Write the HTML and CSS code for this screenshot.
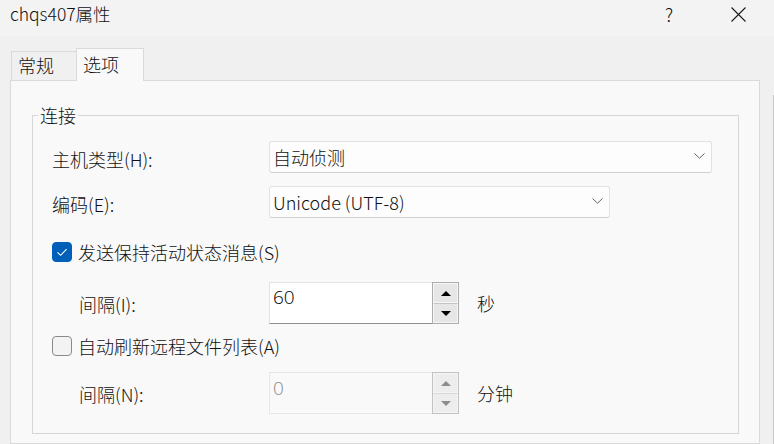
FILE: index.html
```html
<!DOCTYPE html>
<html lang="zh-CN">
<head>
<meta charset="utf-8">
<title>chqs407属性</title>
<link rel="stylesheet" href="styles.css">
</head>
<body>
<div class="window">
  <header class="titlebar">
    <span class="title">chqs407属性</span>
    <span class="help">?</span>
    <span class="close">
      <svg width="15" height="15" viewBox="0 0 15 15"><path d="M0.5 0.5 L14.5 14.5 M14.5 0.5 L0.5 14.5" stroke="#1b1b1b" stroke-width="1.1" fill="none"/></svg>
    </span>
  </header>
  <main class="body">
    <div class="tabs">
      <div class="tab">常规</div>
      <div class="tab active">选项</div>
    </div>
    <section class="panel">
      <fieldset class="group">
        <legend>连接</legend>
        <div class="row r1">
          <label class="lbl">主机类型(H):</label>
          <div class="combo wide"><span>自动侦测</span>
            <svg class="chev" width="11" height="6" viewBox="0 0 11 6"><path d="M0.5 0.5 L5.5 5.2 L10.5 0.5" stroke="#616161" stroke-width="1" fill="none"/></svg>
          </div>
        </div>
        <div class="row r2">
          <label class="lbl">编码(E):</label>
          <div class="combo narrow"><span class="latin">Unicode (UTF-8)</span>
            <svg class="chev" width="11" height="6" viewBox="0 0 11 6"><path d="M0.5 0.5 L5.5 5.2 L10.5 0.5" stroke="#616161" stroke-width="1" fill="none"/></svg>
          </div>
        </div>
        <div class="row r3">
          <span class="check on">
            <svg width="20" height="20" viewBox="0 0 20 20"><path d="M5.5 10.3 L8.6 13.3 L14.6 7.2" stroke="#fff" stroke-width="1.1" fill="none"/></svg>
          </span>
          <span class="check-text">发送保持活动状态消息(S)</span>
        </div>
        <div class="row r4">
          <label class="lbl indent">间隔(I):</label>
          <div class="spin">
            <div class="spin-input">60</div>
            <div class="spin-btns">
              <div class="sbtn"><span class="tri up"></span></div>
              <div class="sbtn down"><span class="tri dn"></span></div>
            </div>
          </div>
          <span class="unit">秒</span>
        </div>
        <div class="row r5">
          <span class="check"></span>
          <span class="check-text">自动刷新远程文件列表(A)</span>
        </div>
        <div class="row r6">
          <label class="lbl indent">间隔(N):</label>
          <div class="spin disabled">
            <div class="spin-input">0</div>
            <div class="spin-btns">
              <div class="sbtn"><span class="tri up"></span></div>
              <div class="sbtn down"><span class="tri dn"></span></div>
            </div>
          </div>
          <span class="unit">分钟</span>
        </div>
      </fieldset>
    </section>
  </main>
</div>
</body>
</html>
```

FILE: styles.css
```css
* { box-sizing: border-box; }
html, body { margin: 0; padding: 0; }
body {
  width: 774px;
  height: 444px;
  overflow: hidden;
  background: #f0f0f0;
  font-family: "Noto Sans CJK SC", "Noto Sans", sans-serif;
  font-size: 18px;
  font-weight: 300;
  color: #111111;
}
.window { width: 774px; height: 444px; position: relative; }
.window::after {
  content: "";
  position: absolute;
  right: 0;
  top: 95px;
  bottom: 0;
  width: 1px;
  background: #c8c8c8;
}

.titlebar {
  height: 36px;
  background: #f3f3f3;
  display: flex;
  align-items: flex-start;
  line-height: 28px;
  padding-left: 10px;
}
.title { flex: 1; font-size: 17.5px; }
.help { width: 30px; text-align: center; margin-right: 32px; }
.close {
  width: 45px;
  height: 28px;
  margin-right: 13px;
  display: flex;
  align-items: center;
  justify-content: center;
}
.close svg { display: block; }

.body { padding: 12px 0 0 10px; }

.tabs {
  width: 750px;
  height: 33px;
  display: flex;
  align-items: flex-end;
  padding-left: 1px;
  border-bottom: 1px solid #dadada;
}
.tab {
  width: 65px;
  height: 29px;
  border: 1px solid #dadada;
  border-bottom: none;
  border-right: none;
  background: #f0f0f0;
  padding: 0 0 3px 6px;
  display: flex;
  align-items: center;
  line-height: 20px;
}
.tab.active {
  width: 68px;
  height: 33px;
  margin-bottom: -1px;
  border-right: 1px solid #dadada;
  background: #f9f9f9;
}

.panel {
  width: 750px;
  height: 363px;
  background: #f9f9f9;
  border: 1px solid #dadada;
  border-top: none;
  padding: 22px 20px 0 21px;
}

.group {
  margin: 0;
  min-width: 0;
  padding: 0 19px 19px 19px;
  border: 1px solid #d6d6d6;
}
.group legend {
  margin-left: -14px;
  padding: 0 2px;
  line-height: 24px;
}

.row { display: flex; align-items: center; }
.r1 { height: 32px; margin-top: 14px; }
.r2 { height: 32px; margin-top: 13px; }
.r3 { height: 20px; margin-top: 24px; }
.r4 { height: 42px; margin-top: 20px; }
.r5 { height: 20px; margin-top: 12px; }
.r6 { height: 42px; margin-top: 16px; }

.lbl { width: 217px; line-height: 24px; padding-top: 4px; }
.lbl.indent { padding-left: 27px; padding-top: 2px; }

.combo {
  height: 32px;
  background: #fdfdfd;
  border: 1px solid #e2e2e2;
  border-bottom-color: #d0d0d0;
  border-radius: 3px;
  display: flex;
  align-items: center;
  justify-content: space-between;
  padding: 0 6px 1px 3px;
  line-height: 24px;
}
.combo.wide { width: 443px; }
.combo.narrow { width: 341px; }
.chev { display: block; margin-top: -1px; }

.check {
  width: 20px;
  height: 20px;
  border-radius: 4px;
  border: 1px solid #8a8a8a;
  background: #f3f3f3;
  flex: none;
}
.check.on { background: #005fb8; border-color: #005fb8; }
.check.on svg { display: block; margin: -1px; }
.check-text { margin-left: 6px; line-height: 24px; }

.spin {
  width: 190px;
  height: 42px;
  display: flex;
}
.spin-input {
  flex: 1;
  background: #ffffff;
  border: 1px solid #e3e3e3;
  border-right: none;
  border-bottom: 1px solid #8f8f8f;
  font-family: "Open Sans", "Liberation Sans", sans-serif;
  font-weight: 300;
  font-size: 19px;
  line-height: 22px;
  padding: 3px 0 0 3px;
  color: #000;
}
.spin-btns {
  width: 27px;
  border: 1px solid #adadad;
  display: flex;
  flex-direction: column;
}
.sbtn {
  flex: 1;
  background: #e6e6e6;
  border: 1px solid #f6f6f6;
  display: flex;
  align-items: center;
  justify-content: center;
}
.sbtn.down { border-top: 1px solid #c4c4c4; }
.tri { width: 0; height: 0; border-left: 5px solid transparent; border-right: 5px solid transparent; }
.tri.up { border-bottom: 5px solid #000; }
.tri.dn { border-top: 5px solid #000; }

.spin.disabled .spin-input {
  background: #f9f9f9;
  border-color: #e6e6e6;
  color: #8d8d8d;
  padding-top: 4px;
}
.spin.disabled .spin-btns { border-color: #c2c2c2; }
.spin.disabled .sbtn { background: #ededed; border-color: #f4f4f4; }
.spin.disabled .sbtn.down { border-top-color: #d8d8d8; }
.spin.disabled .tri.up { border-bottom-color: #8d8d8d; }
.spin.disabled .tri.dn { border-top-color: #8d8d8d; }

.unit { margin-left: 18px; line-height: 24px; }
```
